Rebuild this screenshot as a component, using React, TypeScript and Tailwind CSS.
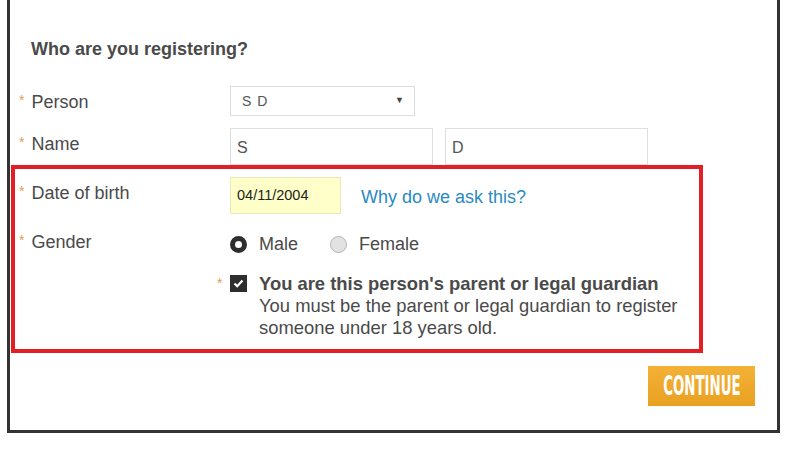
import React from "react";

const font = { fontFamily: '"Liberation Sans", Arial, sans-serif' };

function Star() {
  return <span className="text-[#d9a15c] text-[14px] mr-[7px] relative -top-[3px]">*</span>;
}

export default function App() {
  return (
    <div className="w-[797px] h-[455px] bg-white relative text-[#4a4a4a]" style={font}>
      <div className="ml-[7px] w-[773px] h-[433px] border-x-[3px] border-b-[3px] border-[#333] flex flex-col">
        <h2 className="mt-[38px] ml-[21px] text-[18px] leading-[22px] font-bold text-[#4a4a4a]">
          Who are you registering?
        </h2>

        {/* Person */}
        <div className="flex mt-[26px]">
          <div className="w-[220px] pl-[9px] pt-[5px] text-[18px] leading-[22px]">
            <Star />Person
          </div>
          <div className="w-[185px] h-[30px] border border-[#dedede] flex items-center justify-between pl-[11px] pr-[9px] text-[14px] text-[#555] tracking-[1px]">
            <span>S D</span>
            <span className="text-[9px] text-[#444]">▼</span>
          </div>
        </div>

        {/* Name */}
        <div className="flex mt-[12px]">
          <div className="w-[220px] pl-[9px] pt-[5px] text-[18px] leading-[22px]">
            <Star />Name
          </div>
          <div className="flex gap-[12px]">
            <div className="w-[203px] h-[37px] border border-[#dedede] flex items-center pl-[6px] pt-[2px] text-[16px] text-[#555]">S</div>
            <div className="w-[203px] h-[37px] border border-[#dedede] flex items-center pl-[6px] pt-[2px] text-[16px] text-[#555]">D</div>
          </div>
        </div>

        {/* Date of birth */}
        <div className="flex mt-[12px]">
          <div className="w-[220px] pl-[9px] pt-[5px] text-[18px] leading-[22px]">
            <Star />Date of birth
          </div>
          <div className="flex items-center">
            <div className="w-[111px] h-[37px] bg-[#ffffc9] border border-[#e8e8b8] flex items-center pl-[6px] text-[14.5px] text-[#222]">
              04/11/2004
            </div>
            <a className="ml-[20px] mt-[3px] text-[18px] text-[#2a8ac2]">Why do we ask this?</a>
          </div>
        </div>

        {/* Gender */}
        <div className="flex mt-[17px]">
          <div className="w-[220px] pl-[9px] text-[18px] leading-[22px]">
            <Star />Gender
          </div>
          <div className="flex items-center pt-[2px] text-[18px] leading-[22px]">
            <span className="w-[17px] h-[17px] rounded-full border-[5px] border-[#2e2e2e] bg-white" />
            <span className="ml-[12px]">Male</span>
            <span className="ml-[32px] w-[17px] h-[17px] rounded-full border border-[#b5b5b5] bg-[#e2e2e2]" />
            <span className="ml-[12px]">Female</span>
          </div>
        </div>

        {/* Guardian */}
        <div className="flex mt-[18px]">
          <div className="w-[220px] pl-[207px] pt-[1px] text-[18px] leading-[22px]">
            <Star />
          </div>
          <div className="flex">
            <span className="mt-[2px] w-[17px] h-[17px] bg-[#2e2e2e] flex items-center justify-center">
              <svg width="11" height="9" viewBox="0 0 11 9">
                <polyline points="1.5,4.5 4.2,7.2 9.5,1.5" fill="none" stroke="white" strokeWidth="2.2" />
              </svg>
            </span>
            <div className="ml-[12px] text-[18.4px] leading-[22px]">
              <div className="font-bold">You are this person's parent or legal guardian</div>
              <div>You must be the parent or legal guardian to register</div>
              <div>someone under 18 years old.</div>
            </div>
          </div>
        </div>

        <div className="flex justify-end mt-[27px] mr-[22px]">
          <button className="w-[107px] h-[40px] bg-gradient-to-b from-[#f3b136] to-[#e9a11f] flex items-center justify-center overflow-hidden">
            <span
              className="inline-block text-white font-bold text-[26px] leading-[26px] scale-x-[0.57]"
              style={{ fontFamily: '"Liberation Sans Narrow", "DejaVu Sans Condensed", sans-serif' }}
            >
              CONTINUE
            </span>
          </button>
        </div>
      </div>

      {/* red highlight annotation */}
      <div className="absolute left-[11px] top-[165px] w-[692px] h-[188px] border-[4px] border-[#e31e25] pointer-events-none" />
    </div>
  );
}
